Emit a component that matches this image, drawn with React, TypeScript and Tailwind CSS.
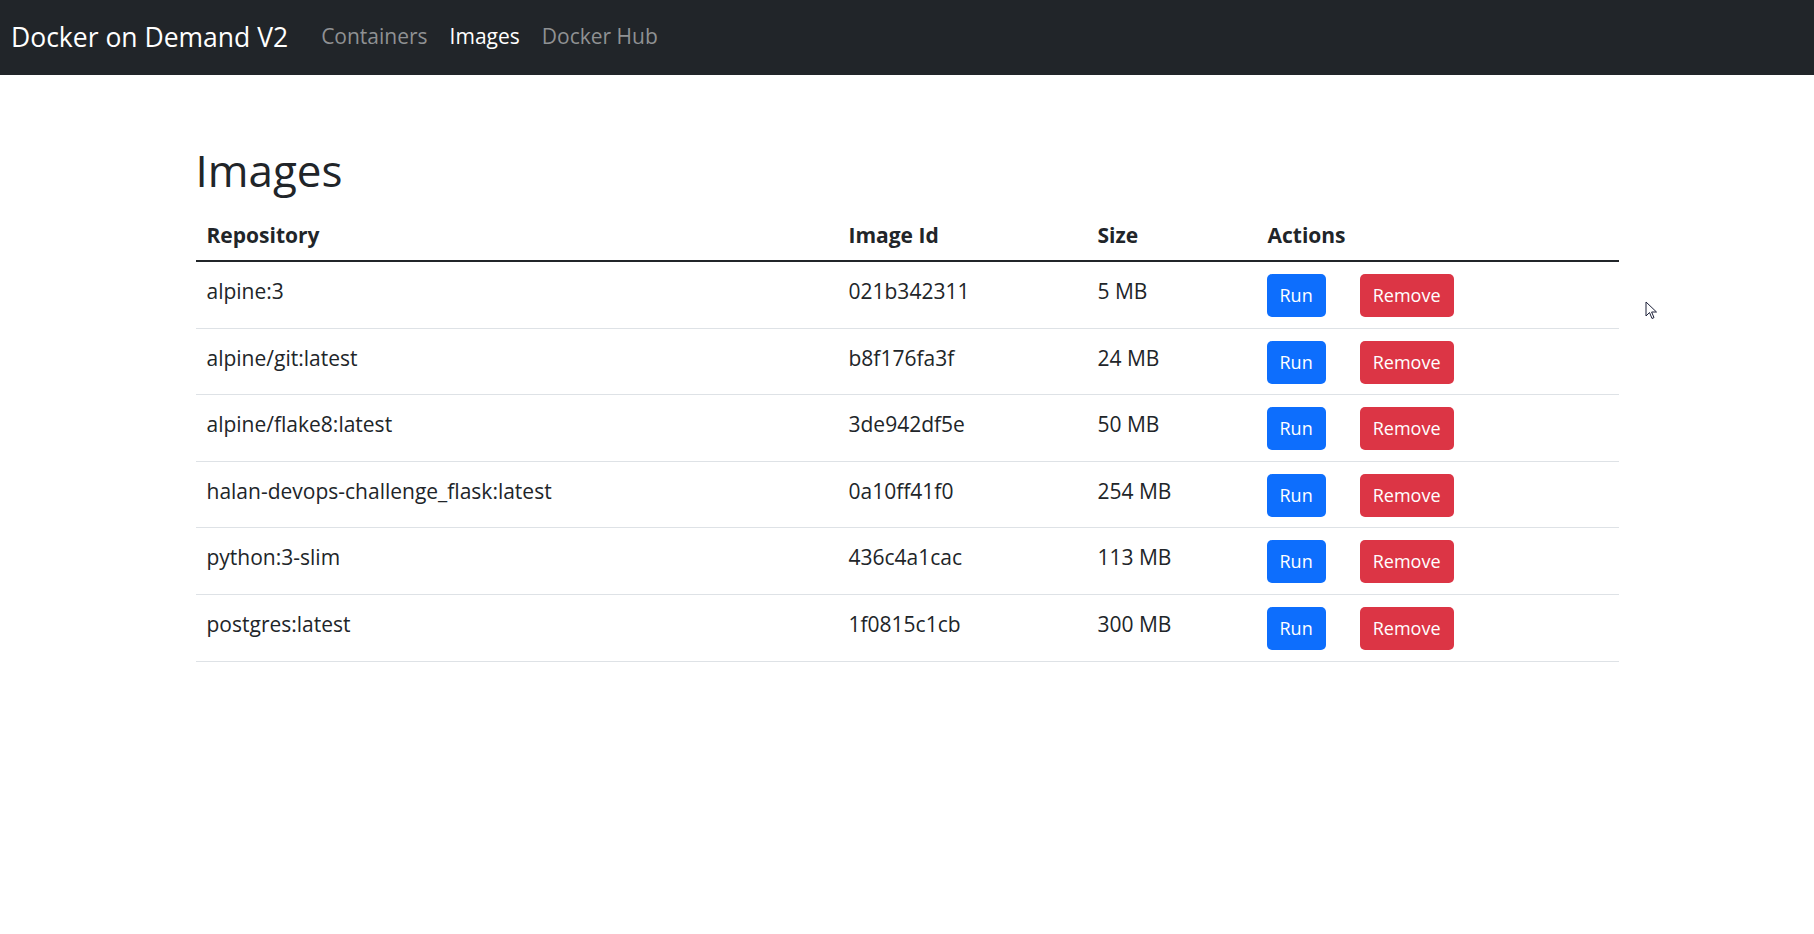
import React from 'react'

type Img = { repo: string; id: string; size: string }

const images: Img[] = [
  { repo: 'alpine:3', id: '021b342311', size: '5 MB' },
  { repo: 'alpine/git:latest', id: 'b8f176fa3f', size: '24 MB' },
  { repo: 'alpine/flake8:latest', id: '3de942df5e', size: '50 MB' },
  { repo: 'halan-devops-challenge_flask:latest', id: '0a10ff41f0', size: '254 MB' },
  { repo: 'python:3-slim', id: '436c4a1cac', size: '113 MB' },
  { repo: 'postgres:latest', id: '1f0815c1cb', size: '300 MB' },
]

const Navbar: React.FC = () => {
  return (
    <nav className="h-[75px] bg-[#212529] flex items-center pl-[11px] pb-[3px]">
      <span className="text-white text-[26.5px] leading-[36px] mr-[22px] pt-[2px]">Docker on Demand V2</span>
      <ul className="flex text-[21px] leading-[30px]">
        <li className="px-[11px] text-[#8f9193] cursor-pointer">Containers</li>
        <li className="px-[11px] text-white cursor-pointer">Images</li>
        <li className="px-[11px] text-[#8f9193] cursor-pointer">Docker Hub</li>
      </ul>
    </nav>
  )
}

const App: React.FC = () => {
  return (
    <div className="relative min-h-[934px] bg-white text-[#212529]" style={{ fontFamily: '"Open Sans", "Noto Sans", sans-serif' }}>
      <Navbar />
      <main className="w-[1423px] mx-auto pt-[68px]">
        <h1 className="text-[44px] leading-[54px] font-medium mb-[14px]">Images</h1>
        <table className="w-full table-fixed border-collapse text-[21px]">
          <colgroup>
            <col className="w-[642px]" />
            <col className="w-[249px]" />
            <col className="w-[170px]" />
            <col />
          </colgroup>
          <thead>
            <tr className="border-b-2 border-[#212529] text-left">
              <th className="px-[11px] pt-[9px] pb-[10px] leading-[30px] font-bold">Repository</th>
              <th className="px-[11px] pt-[9px] pb-[10px] leading-[30px] font-bold">Image Id</th>
              <th className="px-[11px] pt-[9px] pb-[10px] leading-[30px] font-bold">Size</th>
              <th className="px-[11px] pt-[9px] pb-[10px] leading-[30px] font-bold">Actions</th>
            </tr>
          </thead>
          <tbody>
            {images.map((img) => (
              <tr key={img.id} className="border-b border-[#dee2e6]">
                <td className="px-[11px] pt-[14px] align-top leading-[30px]">{img.repo}</td>
                <td className="px-[11px] pt-[14px] align-top leading-[30px]">{img.id}</td>
                <td className="px-[11px] pt-[14px] align-top leading-[30px]">{img.size}</td>
                <td className="px-[10px] pt-[12px] pb-[10.6px] align-top">
                  <div className="flex gap-[34px]">
                    <button className="h-[43px] px-[13px] rounded-[5px] bg-[#0d6efd] text-white text-[18px]">Run</button>
                    <button className="h-[43px] px-[13px] rounded-[5px] bg-[#dc3545] text-white text-[18px]">Remove</button>
                  </div>
                </td>
              </tr>
            ))}
          </tbody>
        </table>
      </main>
      <svg className="absolute left-[1645px] top-[301px]" width="13" height="20" viewBox="0 0 13 20">
        <path d="M1 1 L1 15 L4.5 11.5 L7 17.5 L9 16.6 L6.6 11 L11.5 11 Z" fill="#fff" stroke="#1c2038" strokeWidth="1" strokeLinejoin="round" />
      </svg>
    </div>
  )
}

export default App
